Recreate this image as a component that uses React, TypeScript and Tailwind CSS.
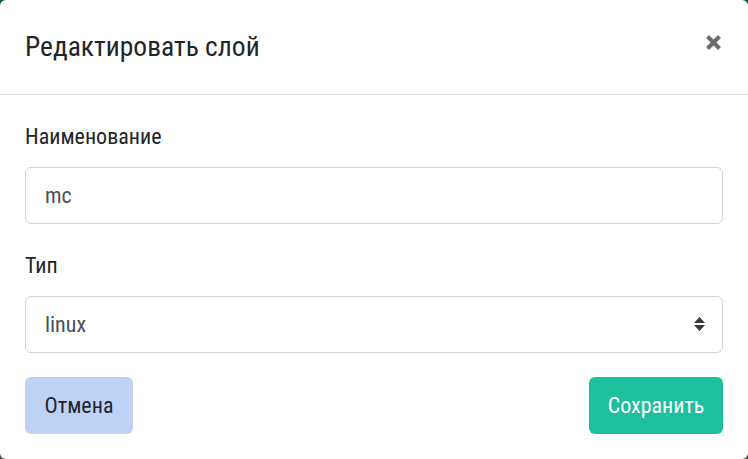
import React, { useState } from 'react';

export default function App() {
  const [name, setName] = useState('mc');
  const [type, setType] = useState('linux');

  return (
    <div className="w-[748px] h-[459px] bg-gradient-to-b from-[#0d5a48] to-[#4f4f4f]" style={{ fontFamily: '"Liberation Sans Narrow", "Roboto Condensed", Roboto, sans-serif' }}>
      <div className="w-full h-full bg-white rounded-[6px] flex flex-col">
        {/* Header */}
        <div className="h-[95px] shrink-0 flex items-center justify-between pl-[25px] pr-[26px] border-b border-[#dee2e6]">
          <h2 className="text-[27.5px] leading-none text-[#212529]">Редактировать слой</h2>
          <button className="text-[#6c6c6c] w-[17px] h-[17px] flex items-center justify-center -mt-[9px]">
            <svg width="17" height="17" viewBox="0 0 17 17">
              <path d="M2.5 2.5 L14.5 14.5 M14.5 2.5 L2.5 14.5" stroke="currentColor" strokeWidth="4" strokeLinecap="butt" />
            </svg>
          </button>
        </div>

        {/* Body */}
        <div className="px-[25px] pt-[30px] flex flex-col">
          <label className="text-[22px] leading-[24px] text-[#212529] mb-[18px]">Наименование</label>
          <input
            value={name}
            onChange={e => setName(e.target.value)}
            className="h-[57px] w-full border border-[#ced4da] rounded-[6px] px-[19px] text-[22px] text-[#495057] outline-none"
          />
          <label className="text-[22px] leading-[24px] text-[#212529] mt-[30px] mb-[18px]">Тип</label>
          <div className="relative">
            <select
              value={type}
              onChange={e => setType(e.target.value)}
              className="appearance-none h-[57px] w-full border border-[#ced4da] rounded-[6px] px-[19px] text-[22px] text-[#495057] outline-none bg-white"
            >
              <option value="linux">linux</option>
              <option value="windows">windows</option>
            </select>
            <svg className="absolute right-[17px] top-[20px] pointer-events-none" width="13" height="16" viewBox="0 0 13 16">
              <path d="M6.5 1 L12 7 H1 Z M1 9 H12 L6.5 15 Z" fill="#343a40" />
            </svg>
          </div>

          <div className="flex justify-between mt-[24px]">
            <button className="h-[57px] w-[108px] rounded-[6px] bg-[#bdd2f6] text-[#212529] text-[22px]">Отмена</button>
            <button className="h-[57px] w-[134px] rounded-[6px] bg-[#1dbf9c] text-white text-[22px]">Сохранить</button>
          </div>
        </div>
      </div>
    </div>
  );
}
